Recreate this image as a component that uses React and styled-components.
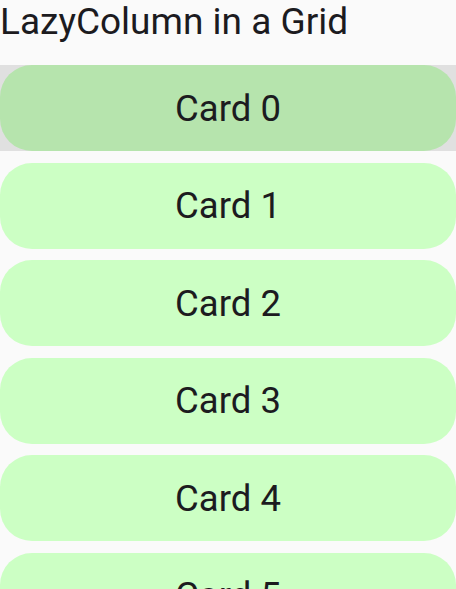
import React from "react";
import styled, { createGlobalStyle } from "styled-components";

const Global = createGlobalStyle`
  html, body { margin: 0; padding: 0; background: #fafafa; }
  body { font-family: Roboto, "Noto Sans", sans-serif; color: #1c1b1f; }
  #root { width: 456px; height: 589px; overflow: hidden; }
`;

const Screen = styled.div`
  width: 456px;
  height: 589px;
  background: #fafafa;
  overflow: hidden;
  display: flex;
  flex-direction: column;
`;

const Title = styled.div`
  flex-shrink: 0;
  font-size: 37px;
  line-height: 40px;
  padding-top: 2px;
  height: 65px;
  box-sizing: border-box;
  white-space: nowrap;
  color: #1c1b1f;
`;

const List = styled.div`
  flex-shrink: 0;
  display: flex;
  flex-direction: column;
  gap: 11.6px;
`;

const Item = styled.div`
  background: ${(p) => (p.$selected ? "#e0e0e0" : "transparent")};
  flex-shrink: 0;
`;

const Card = styled.div`
  height: 86px;
  border-radius: 32px;
  background: ${(p) => (p.$selected ? "#b6e4ad" : "#ccffc4")};
  display: flex;
  align-items: center;
  justify-content: center;
  font-size: 36.5px;
  color: #1c1b1f;
`;

export default function App() {
  const cards = [0, 1, 2, 3, 4, 5, 6];
  return (
    <>
      <Global />
      <Screen>
        <Title>LazyColumn in a Grid</Title>
        <List>
          {cards.map((i) => (
            <Item key={i} $selected={i === 0}>
              <Card $selected={i === 0}>Card {i}</Card>
            </Item>
          ))}
        </List>
      </Screen>
    </>
  );
}
